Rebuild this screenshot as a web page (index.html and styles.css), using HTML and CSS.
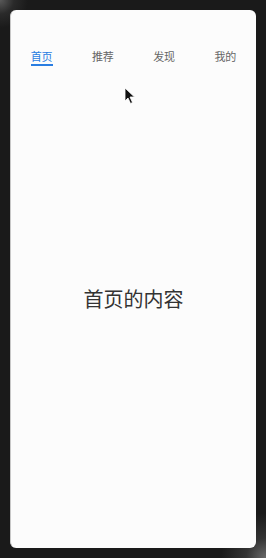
FILE: index.html
```html
<!DOCTYPE html>
<html lang="zh">
<head>
<meta charset="utf-8">
<link rel="stylesheet" href="styles.css">
</head>
<body>
<div class="device">
  <div class="screen">
    <nav class="tabs">
      <div class="tab active"><span>首页</span></div>
      <div class="tab"><span>推荐</span></div>
      <div class="tab"><span>发现</span></div>
      <div class="tab"><span>我的</span></div>
    </nav>
    <main class="content">首页的内容</main>
    <svg class="cursor" width="12" height="18" viewBox="0 0 12 18">
      <path d="M1 1 L1 14 L4 11 L6.5 16.5 L8.5 15.5 L6 10 L10.5 10 Z" fill="#111" stroke="#fff" stroke-width="0.8"/>
    </svg>
  </div>
</div>
</body>
</html>
```
FILE: styles.css
```css
html, body {
  margin: 0;
  padding: 0;
  width: 266px;
  height: 558px;
  overflow: hidden;
}
body {
  background: #1a1a1a;
  font-family: "Noto Sans CJK SC", "Noto Sans", sans-serif;
}
.device {
  width: 266px;
  height: 558px;
  box-sizing: border-box;
  padding: 10px 10px 10px 10px;
  background:
    radial-gradient(circle at 0 0, #5a5a5a 0, #2a2a2a 14px, rgba(26,26,26,0) 28px),
    radial-gradient(circle at 100% 100%, #6a6a6a 0, #333 20px, rgba(26,26,26,0) 45px),
    #1a1a1a;
}
.screen {
  position: relative;
  height: 100%;
  background: #fcfcfc;
  border-radius: 6px;
  border-left: 1px solid #c8c8c8;
  display: flex;
  flex-direction: column;
  overflow: hidden;
}
.tabs {
  display: flex;
  padding-top: 38px;
  height: 28px;
}
.tab {
  flex: 1;
  display: flex;
  justify-content: center;
  font-size: 11px;
  color: #666;
  line-height: 16px;
}
.tab span {
  height: 16px;
}
.tab.active {
  color: #2a7de1;
}
.tab.active span {
  border-bottom: 2px solid #2a7de1;
}
.content {
  flex: 1;
  display: flex;
  align-items: center;
  justify-content: center;
  font-size: 20px;
  color: #333;
  padding-bottom: 28px;
}
.cursor {
  position: absolute;
  left: 113px;
  top: 77px;
}
```
